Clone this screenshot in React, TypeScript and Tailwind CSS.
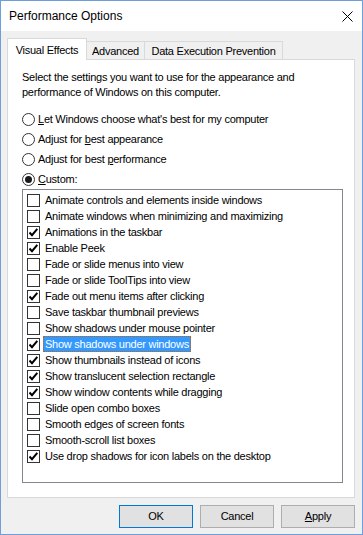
import React from "react";

const effects: { label: string; checked: boolean; selected?: boolean }[] = [
  { label: "Animate controls and elements inside windows", checked: false },
  { label: "Animate windows when minimizing and maximizing", checked: false },
  { label: "Animations in the taskbar", checked: true },
  { label: "Enable Peek", checked: true },
  { label: "Fade or slide menus into view", checked: false },
  { label: "Fade or slide ToolTips into view", checked: false },
  { label: "Fade out menu items after clicking", checked: true },
  { label: "Save taskbar thumbnail previews", checked: false },
  { label: "Show shadows under mouse pointer", checked: false },
  { label: "Show shadows under windows", checked: true, selected: true },
  { label: "Show thumbnails instead of icons", checked: true },
  { label: "Show translucent selection rectangle", checked: true },
  { label: "Show window contents while dragging", checked: true },
  { label: "Slide open combo boxes", checked: false },
  { label: "Smooth edges of screen fonts", checked: false },
  { label: "Smooth-scroll list boxes", checked: false },
  { label: "Use drop shadows for icon labels on the desktop", checked: true },
];

function Radio({ checked, children }: { checked?: boolean; children: React.ReactNode }) {
  return (
    <div className="h-[20px] flex items-center">
      <span className="w-[13px] h-[13px] rounded-full border border-[#333333] bg-white flex items-center justify-center shrink-0">
        {checked && <span className="w-[7px] h-[7px] rounded-full bg-[#1a1a1a]" />}
      </span>
      <span className="ml-[3px] leading-[15px]">{children}</span>
    </div>
  );
}

function Check({ checked }: { checked: boolean }) {
  return (
    <span className="w-[13px] h-[13px] border border-[#333333] bg-white shrink-0 flex items-center justify-center">
      {checked && (
        <svg width="11" height="11" viewBox="0 0 11 11">
          <path d="M1.5 5.5 L4 8.2 L9.3 1.8" fill="none" stroke="#000" strokeWidth="2" />
        </svg>
      )}
    </span>
  );
}

export default function App() {
  return (
    <div className="w-[363px] h-[535px] border border-[#6e9fdd] flex flex-col font-['Liberation_Sans',Arial,sans-serif] text-[11px] tracking-[-0.25px] text-black">
      {/* Title bar */}
      <div className="h-[30px] bg-white flex items-center justify-between pl-[8px] pr-[9px] shrink-0">
        <span className="text-[12px] tracking-normal">Performance Options</span>
        <svg width="11" height="11" viewBox="0 0 11 11">
          <path d="M0.5 0.5 L10.5 10.5 M10.5 0.5 L0.5 10.5" stroke="#000" strokeWidth="1" />
        </svg>
      </div>

      <div className="flex-1 bg-[#f0f0f0] flex flex-col pt-[7px]">
        {/* Tabs */}
        <div className="flex items-end pl-[6px] h-[21px] whitespace-nowrap">
          <div className="relative z-10 -mb-px h-[22px] w-[80px] bg-white border border-b-0 border-[#d9d9d9] flex items-start justify-center pt-[3px]">
            Visual Effects
          </div>
          <div className="h-[18px] w-[58px] border border-b-0 border-l-0 border-[#d9d9d9] flex items-center justify-center pt-[1px]">
            Advanced
          </div>
          <div className="h-[18px] w-[138px] border border-b-0 border-l-0 border-[#d9d9d9] flex items-center justify-center pt-[1px]">
            Data Execution Prevention
          </div>
        </div>

        {/* Panel */}
        <div className="ml-[6px] w-[348px] h-[439px] bg-white border border-[#d9d9d9] pl-[14px] pt-[10px]">
          <p className="leading-[15px]">
            Select the settings you want to use for the appearance and
            <br />
            performance of Windows on this computer.
          </p>
          <div className="mt-[9px]">
            <Radio>
              <span className="underline">L</span>et Windows choose what's best for my computer
            </Radio>
            <Radio>
              Adjust for <span className="underline">b</span>est appearance
            </Radio>
            <Radio>
              Adjust for best <span className="underline">p</span>erformance
            </Radio>
            <Radio checked>
              <span className="underline">C</span>ustom:
            </Radio>
          </div>

          <div className="w-[321px] h-[294px] border border-[#828790] pt-[2px] pl-[4px]">
            {effects.map((e) => (
              <div key={e.label} className="h-[16px] flex items-center whitespace-nowrap">
                <Check checked={e.checked} />
                <span
                  className={
                    e.selected
                      ? "ml-[3px] h-[16px] flex items-center px-[1px] bg-[#3399ff] text-white border border-dotted border-[#c86400]"
                      : "ml-[4px] pl-[1px]"
                  }
                >
                  {e.label}
                </span>
              </div>
            ))}
          </div>
        </div>

        {/* Buttons */}
        <div className="flex justify-end gap-[7px] pr-[7px] mt-[7px]">
          <button className="w-[74px] h-[23px] bg-[#e1e1e1] border border-[#0078d7]">OK</button>
          <button className="w-[74px] h-[23px] bg-[#e1e1e1] border border-[#adadad]">Cancel</button>
          <button className="w-[74px] h-[23px] bg-[#e1e1e1] border border-[#adadad]">
            <span className="underline">A</span>pply
          </button>
        </div>
      </div>
    </div>
  );
}
